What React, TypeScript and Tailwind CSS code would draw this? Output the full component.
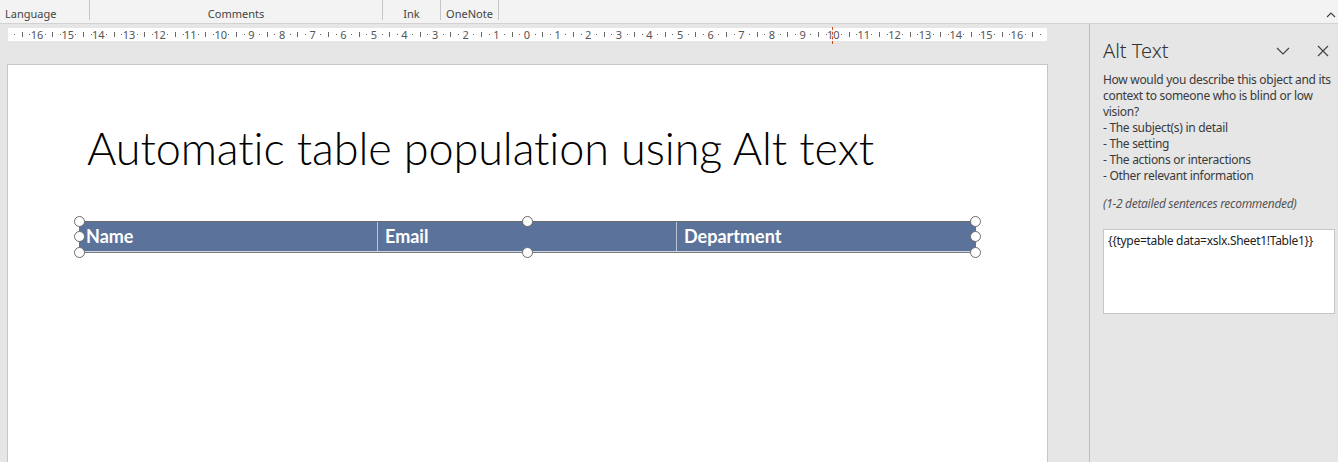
import React from "react";

const UNIT = 30.62;
const ZERO = 527;

function Ruler() {
  const items: React.ReactNode[] = [];
  const off = 8;
  for (let n = -17; n <= 16; n++) {
    const x = ZERO + n * UNIT - off;
    if (n >= -16) {
      items.push(
        <text key={"t" + n} x={x} y={10.5} fontSize={11} fill="#555" textAnchor="middle" fontFamily="'Noto Sans', sans-serif">
          {Math.abs(n)}
        </text>
      );
    }
    const d1 = x + UNIT / 4;
    const d2 = x + UNIT / 2;
    const d3 = x + (3 * UNIT) / 4;
    if (d1 > 2 && d1 < 1036) items.push(<rect key={"a" + n} x={Math.round(d1)} y={6} width={1} height={1} fill="#666" />);
    if (d2 > 2 && d2 < 1036) items.push(<rect key={"b" + n} x={Math.round(d2)} y={4} width={1} height={5} fill="#666" />);
    if (d3 > 2 && d3 < 1036) items.push(<rect key={"c" + n} x={Math.round(d3)} y={6} width={1} height={1} fill="#666" />);
  }
  return (
    <div className="ml-[8px] mt-[4px] h-[13px] w-[1039px] bg-white relative">
      <svg width={1039} height={13} className="block">
        {items}
      </svg>
      <div className="absolute left-[824px] top-[-1px] h-[17px] w-0 border-l border-dashed border-[#d04a1a]" />
    </div>
  );
}

function Handle({ x, y }: { x: number; y: number }) {
  return (
    <div
      className="absolute w-[11px] h-[11px] rounded-full bg-white border-[1.5px] border-[#6b6b6b]"
      style={{ left: x - 5.5, top: y - 5.5 }}
    />
  );
}

export default function App() {
  const seg = "font-['Noto_Sans',sans-serif]";
  return (
    <div className={`w-[1338px] h-[462px] overflow-hidden bg-[#e6e6e6] flex flex-col ${seg}`}>
      {/* Ribbon strip */}
      <div className="h-[24px] bg-[#f3f3f3] border-b border-[#d2d2d2] flex text-[11px] text-[#444] relative shrink-0">
        <div className="w-[90px] border-r border-[#c6c6c6] h-[20px] flex items-end pl-[5px] leading-none pb-[1px]">Language</div>
        <div className="w-[293px] border-r border-[#c6c6c6] h-[20px] flex items-end justify-center leading-none pb-[1px]">Comments</div>
        <div className="w-[58px] border-r border-[#c6c6c6] h-[20px] flex items-end justify-center leading-none pb-[1px]">Ink</div>
        <div className="w-[58px] border-r border-[#c6c6c6] h-[20px] flex items-end justify-center leading-none pb-[1px]">OneNote</div>
        <svg className="absolute right-[2px] top-[12px]" width="10" height="6" viewBox="0 0 10 6">
          <path d="M1 5 L5 1 L9 5" stroke="#444" strokeWidth="1.2" fill="none" />
        </svg>
      </div>
      <div className="flex flex-1 min-h-0">
        {/* Document area */}
        <div className="w-[1089px] flex flex-col">
          <Ruler />
          <div className="ml-[7px] mt-[23px] w-[1041px] flex-1 bg-white border border-[#c6c6c6] border-b-0 relative">
            <div className="pl-[79px] pt-[57px] font-['Lato',sans-serif] font-light text-[45px] leading-[52px] text-black tracking-[-0.1px]">
              Automatic table population using Alt text
            </div>
            <div className="ml-[71px] mt-[47px] w-[897px] relative">
              <div className="flex h-[30px] bg-[#5b739b] border-t border-[#6a6a6a] font-['Lato',sans-serif] font-bold text-[18px] text-white">
                <div className="w-[299px] border-r border-[#b9c4d6] pl-[7px] flex items-center">Name</div>
                <div className="w-[299px] border-r border-[#b9c4d6] pl-[7px] flex items-center">Email</div>
                <div className="flex-1 pl-[7px] flex items-center">Department</div>
              </div>
              <div className="h-[1px] bg-[#cfd6e2]" />
              <div className="h-[1px] bg-[#7a7a7a]" />
              <Handle x={0} y={0} />
              <Handle x={448} y={0} />
              <Handle x={896} y={0} />
              <Handle x={0} y={15.5} />
              <Handle x={896} y={15.5} />
              <Handle x={0} y={31} />
              <Handle x={448} y={31} />
              <Handle x={896} y={31} />
            </div>
          </div>
        </div>
        {/* Alt Text pane */}
        <div className="flex-1 border-l border-[#bdbdbd] pl-[13px] pr-[3px]">
          <div className="flex items-center h-[30px] mt-[12px]">
            <div className="text-[20px] font-light text-[#333] leading-none flex-1">Alt Text</div>
            <svg width="14" height="8" viewBox="0 0 14 8" className="mr-[27px]">
              <path d="M1 1 L7 7 L13 1" stroke="#444" strokeWidth="1.2" fill="none" />
            </svg>
            <svg width="12" height="12" viewBox="0 0 12 12" className="mr-[6px]">
              <path d="M1 1 L11 11 M11 1 L1 11" stroke="#444" strokeWidth="1.2" fill="none" />
            </svg>
          </div>
          <div className="mt-[6px] text-[12px] leading-[16px] text-[#3a3a3a] tracking-[-0.3px]">
            <div>How would you describe this object and its</div>
            <div>context to someone who is blind or low</div>
            <div>vision?</div>
            <div>- The subject(s) in detail</div>
            <div>- The setting</div>
            <div>- The actions or interactions</div>
            <div>- Other relevant information</div>
            <div className="mt-[12px] italic text-[#555]">(1-2 detailed sentences recommended)</div>
          </div>
          <div className="mt-[17px] h-[85px] bg-white border border-[#c6c6c6] px-[4px] pt-[3px] text-[12px] leading-[16px] text-[#222] tracking-[-0.3px]">
            {"{{type=table data=xslx.Sheet1!Table1}}"}
          </div>
        </div>
      </div>
    </div>
  );
}
